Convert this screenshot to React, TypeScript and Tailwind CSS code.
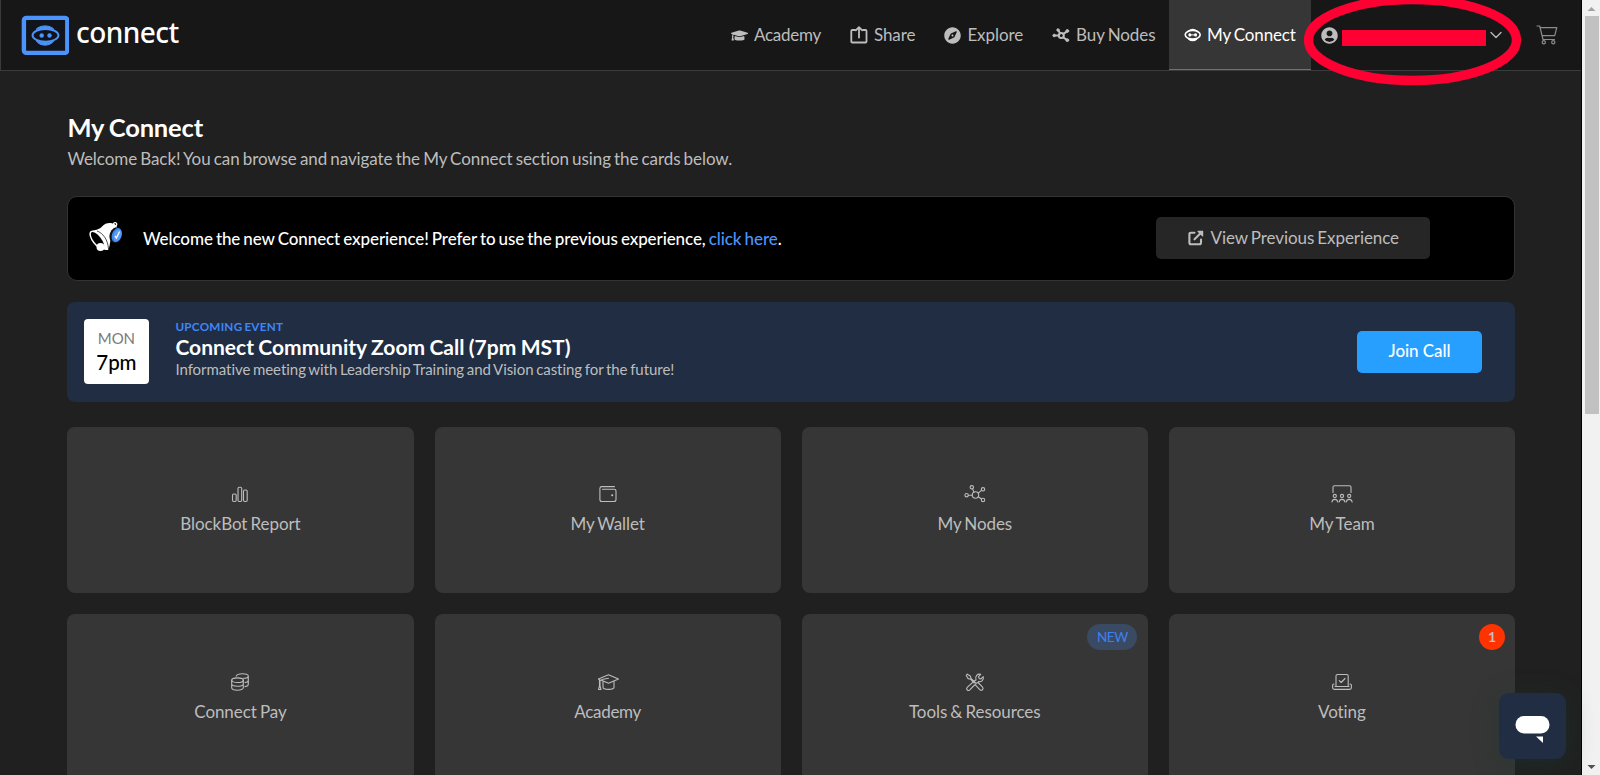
import type { ReactNode } from "react";
import { FaGraduationCap, FaCompass, FaUserCircle } from "react-icons/fa";

function Line({ w = 22, h = 20, sw = 1.1, children, className = "" }: { w?: number; h?: number; sw?: number; children: ReactNode; className?: string }) {
  return (
    <svg width={w} height={h} viewBox={`0 0 ${w} ${h}`} fill="none" stroke="currentColor" strokeWidth={sw} strokeLinecap="round" strokeLinejoin="round" className={`shrink-0 ${className}`}>
      {children}
    </svg>
  );
}

function Logo() {
  return (
    <svg width="48" height="40" viewBox="0 0 48 40" className="shrink-0">
      <rect x="2.900" y="2.900" width="43.400" height="35" rx="2.500" fill="#11141a" stroke="#4b94fc" strokeWidth="4.400" />
      <path d="M15 14.500C18.500 9.700 29.500 9.700 33 14.500C29 12.900 19 12.900 15 14.500Z" fill="#4b94fc" stroke="#4b94fc" />
      <path d="M15 25.500C18.500 31.700 29.500 31.700 33 25.500C29 28.200 19 28.200 15 25.500Z" fill="#4b94fc" stroke="#4b94fc" />
      <ellipse cx="24.500" cy="20.300" rx="13" ry="6.300" fill="#11141a" stroke="#4b94fc" strokeWidth="1.900" />
      <circle cx="20.700" cy="20.500" r="2.200" fill="#4b94fc" />
      <circle cx="28.500" cy="20.500" r="2.200" fill="#4b94fc" />
    </svg>
  );
}

const ShareIcon = () => (
  <Line w={18} h={18} sw={1.8}>
    <path d="M5 4H2.300Q1.300 4 1.300 5V15.500Q1.300 16.500 2.300 16.500H15.500Q16.500 16.500 16.500 15.500V5Q16.500 4 15.500 4H13M9 11.500V1.500M5.800 4.300L9 1.200L12.200 4.300" />
  </Line>
);

const BuyNodesIcon = () => (
  <Line w={18} h={18} sw={2}>
    <circle cx="9.300" cy="9.500" r="2.500" />
    <path d="M2.500 9.500H6.500M8 7.300L6.300 4.200M11.400 7.800L15 5.400M11.200 11.400L15 14" />
    <g fill="currentColor" strokeWidth="1">
      <circle cx="2.200" cy="9.500" r="1.300" />
      <circle cx="6" cy="4" r="1.200" />
      <circle cx="15.300" cy="5" r="1.400" />
      <circle cx="15.300" cy="14.200" r="1.400" />
    </g>
  </Line>
);

const BotIcon = () => (
  <svg width="18" height="14" viewBox="0 0 18 14" className="shrink-0">
    <ellipse cx="8.700" cy="7" rx="6.300" ry="6.300" fill="#fff" />
    <ellipse cx="8.700" cy="6.800" rx="7.500" ry="4.300" fill="#363636" stroke="#fff" strokeWidth="1.600" />
    <path d="M5.800 5.200a1.500 1.700 0 1 0 .1 0M11.500 5.200a1.500 1.700 0 1 0 .1 0" fill="#fff" />
    <path d="M6 6.900H11.500" stroke="#fff" />
  </svg>
);

const CartIcon = () => (
  <Line w={22} h={20} sw={1.2}>
    <path d="M1 1H3.700L7 14.500H18.500M4.200 2.600H20.800L18.700 10.700H6.200" />
    <circle cx="7.800" cy="17.300" r="1.600" />
    <circle cx="17.300" cy="17.300" r="1.600" />
  </Line>
);

const Megaphone = () => (
  <svg width="36" height="32" viewBox="0 0 36 32" className="mt-[-3px] shrink-0">
    <path d="M2 11C7 8.500 11 9 14 5.500C17.500 1.500 23 1 27 3.500C31 6 29 12 25 15C21 18 23 24 20 29C14 30 3 20 2 11Z" fill="#fff" />
    <path d="M26 4.500C24.500 2 27.500.500 28.600 2.500C29.200 3.800 28 5 27 5" fill="none" stroke="#fff" strokeWidth="1.300" />
    <ellipse cx="9.500" cy="19" rx="4.500" ry="10.500" transform="rotate(-38 9.500 19)" fill="#000" stroke="#fff" strokeWidth="1.400" />
    <path d="M9 10C15 12 20 19 20.500 28" fill="none" stroke="#222" strokeWidth=".800" />
    <circle cx="12.500" cy="26" r="4" fill="#fff" />
    <ellipse cx="27.500" cy="14" rx="5.800" ry="8" transform="rotate(20 27.500 14)" fill="#111" />
    <ellipse cx="28.800" cy="14.200" rx="4.900" ry="7.300" transform="rotate(20 28.800 14.200)" fill="#3f86ee" />
    <ellipse cx="29.500" cy="14.300" rx="3.500" ry="5.800" transform="rotate(20 29.500 14.300)" fill="#5a9cf6" />
    <path d="M27 15L28.500 17L31.500 10.500" fill="none" stroke="#fff" strokeWidth="1.300" />
  </svg>
);

const ExternalIcon = () => (
  <Line w={16} h={16} sw={2.1}>
    <path d="M6.500 2.700H3Q1.400 2.700 1.400 4.300V12.500Q1.400 14.300 3 14.300H11.300Q13 14.300 13 12.500V9.500M6.500 9.300L13.500 2.300" />
    <path d="M10 1.300H14.600V5.900Z" fill="currentColor" strokeWidth="1.200" />
  </Line>
);

const icons: Record<string, ReactNode> = {
  report: (
    <Line>
      <rect x="3.500" y="10" width="3.700" height="7.500" rx="1.200" />
      <rect x="9" y="3.300" width="3.700" height="14.200" rx="1.200" />
      <rect x="14.500" y="6" width="3.700" height="11.500" rx="1.200" />
    </Line>
  ),
  wallet: (
    <Line>
      <path d="M17.500 2.600H4.800Q2.900 2.600 2.900 4.500V15.500Q2.900 17.500 4.900 17.500H17Q19 17.500 19 15.500V7.200Q19 5.300 17 5.300H5.500" />
      <circle cx="15.200" cy="11.300" r=".5" fill="currentColor" />
    </Line>
  ),
  nodes: (
    <Line>
      <circle cx="11.500" cy="11" r="3.200" />
      <circle cx="2.600" cy="11.200" r="1.700" />
      <circle cx="7.800" cy="3.300" r="1.700" />
      <circle cx="19" cy="5.300" r="1.700" />
      <circle cx="19" cy="16" r="1.700" />
      <path d="M4.300 11.200H8.300M8.600 4.900L10 8.200M14.200 9.200L17.500 6.300M14.200 12.800L17.500 15" />
    </Line>
  ),
  team: (
    <Line>
      <path d="M2 8.500V3.300Q2 1.700 3.500 1.700H18.500Q20 1.700 20 3.300V8.500" />
      <circle cx="3.800" cy="12" r="1.600" />
      <circle cx="11" cy="12" r="1.600" />
      <circle cx="18.200" cy="12" r="1.600" />
      <path d="M1 18Q1.300 15.400 3.800 15.400T6.700 18M8.200 18Q8.500 15.400 11 15.400T13.900 18M15.300 18Q15.700 15.400 18.200 15.400T21.100 18" />
    </Line>
  ),
  pay: (
    <Line>
      <ellipse cx="8.500" cy="8.200" rx="5.800" ry="2.300" />
      <path d="M2.700 8.200V15.800C2.700 19 14.300 19 14.300 15.800V8.200M2.700 12C2.700 15 14.300 15 14.300 12M7.200 4.200C8 .9 19.300.9 19.300 4C19.300 5.600 17 6.300 14.500 6.300M19.300 4V12.300C19.300 13.800 17.500 14.400 16 14.600M19.300 8.200C19.300 9.600 17.500 10.300 16 10.500" />
    </Line>
  ),
  academy: (
    <Line>
      <path d="M1.500 7L11.500 2.700L21.500 7L11.500 11.300L5 8.500V7.500L11.500 6.300M1.500 7L2.500 8V14L1.500 17.500H4L3 14V8L5 8.500M6 9.500V15.300C6 18 17 18 17 15.300V9.500" />
    </Line>
  ),
  tools: (
    <Line>
      <path d="M3.200 2.200L6.300 4L7 6.300L11.500 10.700M3.200 2.200L2.200 3.500L4.200 6.600L6.500 7.200L10.200 11M12 11.300L14 10.500L18.600 15.100C20 17.500 17.800 19 15.800 17.700L11.500 13.200L12 11.300M9 10.200L3.200 15.400C1.500 17.500 4 19.500 5.800 17.800L10.500 13M12 8C10.700 4 13.500 1.400 16.700 2.300L14.500 4.700L15.300 6.600L17 6.900L19.200 4.700C20 8 17.500 10.300 14.500 9.500M10.500 8.800L12 8" />
    </Line>
  ),
  voting: (
    <Line>
      <path d="M5 14V4Q5 2.500 6.500 2.500H15.700Q17.200 2.500 17.200 4V14M1.600 13.200Q1.600 12 3 12M20.400 13.200Q20.400 12 19 12M1.600 13V15.500Q1.600 17.400 3.300 17.400H18.700Q20.400 17.400 20.400 15.500V13M4 14.500H18M8.300 8.600L10.200 10.500L14 6.500" />
    </Line>
  ),
};

function NavItem({ icon, label, tracking = "" }: { icon: ReactNode; label: string; tracking?: string }) {
  return (
    <a className="flex h-[70px] items-center gap-[6px] px-[14.500px] whitespace-nowrap">
      {icon}
      <span className={tracking}>{label}</span>
    </a>
  );
}

function Card({ icon, label, tracking = "", badge }: { icon: string; label: string; tracking?: string; badge?: ReactNode }) {
  return (
    <div className="relative flex h-[166.500px] flex-col items-center rounded-[8px] bg-[#363636] pt-[57.500px] text-[#bdbdbd]">
      {icons[icon]}
      <span className={`mt-[7px] text-[17px] leading-[26px] whitespace-nowrap ${tracking}`}>{label}</span>
      {badge}
    </div>
  );
}

export default function App() {
  return (
    <div className="relative flex h-[775px] w-[1600px] overflow-hidden bg-[#202020] text-[17px] leading-[26px] tracking-[-0.080px] text-[#bdbdbd] [font-family:Lato,sans-serif] [font-variant-ligatures:none] [word-spacing:-1.100px]">
      <div className="h-full w-[1582px] overflow-hidden border-r border-black">
        <header className="flex h-[71px] items-start border-b border-l border-[#3b3b3b] bg-[#171717]">
          <div className="flex w-[168px] shrink-0 items-start gap-[7px] pt-[15px] pl-[20px]">
            <Logo />
            <span className="text-[28px] leading-[34px] font-medium tracking-[-0.550px] text-white [font-family:'Noto_Sans',sans-serif]">connect</span>
          </div>
          <nav className="ml-auto flex items-start">
            <div className="mr-[-1px] flex">
              <NavItem icon={<FaGraduationCap size={17} />} label="Academy" tracking="tracking-[-0.280px]" />
              <NavItem icon={<ShareIcon />} label="Share" />
              <NavItem icon={<FaCompass size={17} />} label="Explore" />
              <NavItem icon={<BuyNodesIcon />} label="Buy Nodes" />
            </div>
            <a className="flex h-[70px] w-[142px] items-center gap-[5.500px] border-b border-[#707070] bg-[#363636] pl-[14.500px] whitespace-nowrap text-white">
              <BotIcon />
              <span className="tracking-[-0.140px]">My Connect</span>
            </a>
            <div className="flex h-[70px] w-[225px] items-center pl-[9.500px]">
              <FaUserCircle size={17} className="shrink-0" />
              <div className="mt-[6px] ml-[4.500px] h-[16px] w-[144px] bg-[#ff0033]" />
              <Line w={12} h={8} sw={1.3} className="ml-[4px]">
                <path d="M1 1.500L6 6.500L11 1.500" />
              </Line>
            </div>
            <div className="flex h-[69px] w-[45px] items-center text-[#8c8c8c]">
              <CartIcon />
            </div>
          </nav>
        </header>

        <main className="w-[1515px] pl-[67.400px]">
          <h1 className="mt-[39px] text-[25.500px] leading-[34px] font-bold tracking-[-0.150px] text-white">My Connect</h1>
          <p className="mt-[2px] text-[17px] leading-[26px]">Welcome Back! You can browse and navigate the My Connect section using the cards below.</p>

          <section className="mt-[24px] flex h-[85px] items-center rounded-[10px] border border-[#333] bg-black pl-[20px]">
            <Megaphone />
            <p className="ml-[18.600px] text-[17px] font-medium tracking-[-0.095px] whitespace-nowrap text-white">
              Welcome the new Connect experience! Prefer to use the previous experience, <a className="text-[#4b94fc]">click here</a>.
            </p>
            <button className="mt-[-1px] mr-[84px] ml-auto flex h-[42px] w-[274px] items-center justify-center gap-[6.500px] rounded-[5px] bg-[#262626] pb-px pl-px whitespace-nowrap [word-spacing:-1.100px]">
              <ExternalIcon />
              <span>View Previous Experience</span>
            </button>
          </section>

          <section className="mt-[20.500px] flex h-[100px] items-center rounded-[8px] bg-[#202d43]">
            <div className="mt-[-1px] ml-[16.500px] flex h-[65px] w-[65px] shrink-0 flex-col items-center rounded-[4px] bg-white pt-[7px]">
              <span className="text-[15px] leading-[24px] text-[#7a7a7a]">MON</span>
              <span className="text-[20.500px] leading-[25px] font-medium text-black">7pm</span>
            </div>
            <div className="mt-[-5.500px] ml-[26.500px] flex flex-col whitespace-nowrap">
              <span className="text-[11.700px] leading-[16px] font-bold tracking-[0.260px] text-[#3f86f8]">UPCOMING EVENT</span>
              <span className="text-[21px] leading-[25px] font-bold tracking-normal text-white [word-spacing:-0.700px]">Connect Community Zoom Call (7pm MST)</span>
              <span className="text-[15px] leading-[20px] tracking-[-0.050px]">Informative meeting with Leadership Training and Vision casting for the future!</span>
            </div>
            <button className="mr-[33px] ml-auto h-[42px] w-[125px] rounded-[5px] bg-[#269fff] pb-[2px] text-[17px] font-medium text-white">Join Call</button>
          </section>

          <section className="mt-[25px] grid grid-cols-4 gap-[21px]">
            <Card icon="report" label="BlockBot Report" />
            <Card icon="wallet" label="My Wallet" />
            <Card icon="nodes" label="My Nodes" />
            <Card icon="team" label="My Team" />
            <Card icon="pay" label="Connect Pay" />
            <Card icon="academy" label="Academy" tracking="tracking-[-0.280px]" />
            <Card
              icon="tools"
              label="Tools & Resources"
              badge={<span className="absolute top-[10px] right-[10.500px] flex h-[26px] w-[50px] items-center justify-center rounded-full bg-[#3a4a63] text-[13.500px] tracking-[-0.400px] text-[#3f80ee]">NEW</span>}
            />
            <Card
              icon="voting"
              label="Voting"
              badge={<span className="absolute top-[10px] right-[10px] flex h-[26px] w-[26px] items-center justify-center rounded-full bg-[#ff3300] text-[14px] font-bold text-[#c9c0bd]">1</span>}
            />
          </section>
        </main>
      </div>

      <div className="flex w-[18px] flex-col items-center justify-between bg-[#f1f1f1] pl-px">
        <svg width="9" height="13" viewBox="0 0 9 13" className="shrink-0"><path d="M4.500 7L8.500 11H.5Z" fill="#a3a3a3" /></svg>
        <div className="mt-[3px] mb-auto h-[398px] w-[14px] bg-[#c1c1c1]" />
        <svg width="9" height="13" viewBox="0 0 9 13" className="shrink-0"><path d="M.5 3H8.500L4.500 7Z" fill="#505050" /></svg>
      </div>

      <svg width="220" height="92" viewBox="0 0 220 92" className="absolute top-[-6px] left-[1303px]">
        <ellipse cx="109.500" cy="46" rx="104" ry="40.500" fill="none" stroke="#ff0033" strokeWidth="9.300" />
      </svg>

      <div className="absolute top-[692.500px] left-[1499px] flex h-[66.500px] w-[67px] rounded-[10px] bg-[#202d43] shadow-[0_4px_26px_rgba(24,60,52,0.45)]">
        <svg width="67" height="66" viewBox="0 0 67 66">
          <rect x="16.500" y="23" width="34" height="17.500" rx="8.500" fill="#fff" />
          <path d="M37 43.500H44V50Z" fill="#fff" />
        </svg>
      </div>
    </div>
  );
}
